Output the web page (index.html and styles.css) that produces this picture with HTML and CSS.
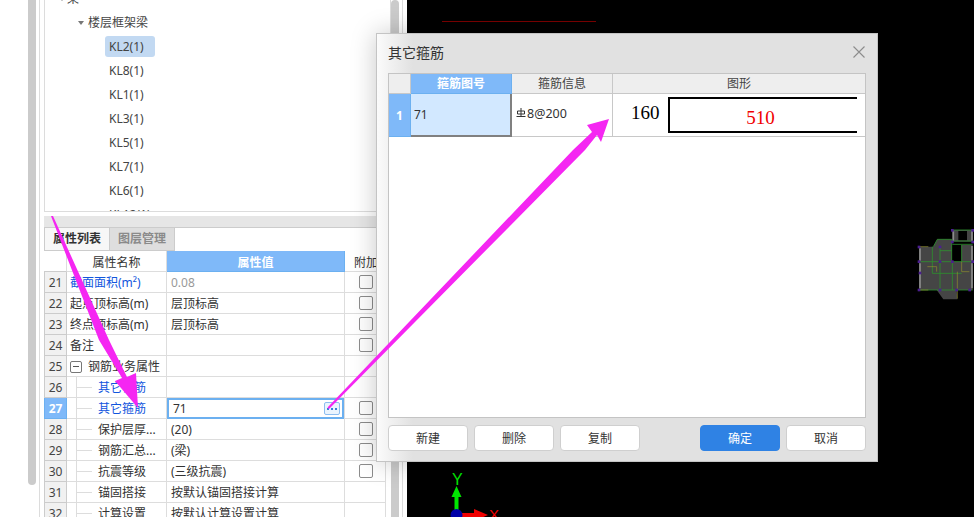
FILE: index.html
```html
<!DOCTYPE html>
<html lang="zh">
<head>
<meta charset="utf-8">
<title>其它箍筋</title>
<link rel="stylesheet" href="styles.css">
</head>
<body>
<div class="app">
  <div class="left">
    <div class="vscroll"></div>
    <div class="inner">
      <div class="tree">
        <ul class="tree-list">
          <li class="node level0"><span class="caret"></span>梁</li>
          <li class="node level1"><span class="caret"></span>楼层框架梁</li>
          <li class="node leaf"><span class="leaf-label active">KL2(1)</span></li>
          <li class="node leaf"><span class="leaf-label">KL8(1)</span></li>
          <li class="node leaf"><span class="leaf-label">KL1(1)</span></li>
          <li class="node leaf"><span class="leaf-label">KL3(1)</span></li>
          <li class="node leaf"><span class="leaf-label">KL5(1)</span></li>
          <li class="node leaf"><span class="leaf-label">KL7(1)</span></li>
          <li class="node leaf"><span class="leaf-label">KL6(1)</span></li>
          <li class="node leaf"><span class="leaf-label">KL12(1)</span></li>
        </ul>
      </div>
      <div class="bar"></div>
      <div class="tabs">
        <div class="tab on">属性列表</div>
        <div class="tab off">图层管理</div>
      </div>
      <table class="props">
        <colgroup><col class="c-idx"><col class="c-name"><col class="c-val"><col class="c-add"></colgroup>
        <thead>
          <tr><th class="idx"></th><th>属性名称</th><th class="hi">属性值</th><th class="add-h">附加</th></tr>
        </thead>
        <tbody>
          <tr><td class="idx">21</td><td class="name link">截面面积(m²)</td><td class="val muted">0.08</td><td class="add"><span class="check"></span></td></tr>
          <tr><td class="idx">22</td><td class="name">起点顶标高(m)</td><td class="val">层顶标高</td><td class="add"><span class="check"></span></td></tr>
          <tr><td class="idx">23</td><td class="name">终点顶标高(m)</td><td class="val">层顶标高</td><td class="add"><span class="check"></span></td></tr>
          <tr><td class="idx">24</td><td class="name">备注</td><td class="val"></td><td class="add"><span class="check"></span></td></tr>
          <tr><td class="idx">25</td><td class="name"><span class="group"><span class="minus"></span>钢筋业务属性</span></td><td class="val"></td><td class="add"></td></tr>
          <tr><td class="idx">26</td><td class="name child link">其它钢筋</td><td class="val"></td><td class="add"></td></tr>
          <tr class="sel"><td class="idx">27</td><td class="name child link">其它箍筋</td><td class="val editing"><span class="edit"><span>71</span><span class="more"><i></i><i></i><i></i></span></span></td><td class="add"><span class="check"></span></td></tr>
          <tr><td class="idx">28</td><td class="name child">保护层厚...</td><td class="val">(20)</td><td class="add"><span class="check"></span></td></tr>
          <tr><td class="idx">29</td><td class="name child">钢筋汇总...</td><td class="val">(梁)</td><td class="add"><span class="check"></span></td></tr>
          <tr><td class="idx">30</td><td class="name child">抗震等级</td><td class="val">(三级抗震)</td><td class="add"><span class="check"></span></td></tr>
          <tr><td class="idx">31</td><td class="name child">锚固搭接</td><td class="val">按默认锚固搭接计算</td><td class="add"></td></tr>
          <tr><td class="idx">32</td><td class="name child">计算设置</td><td class="val">按默认计算设置计算</td><td class="add"></td></tr>
        </tbody>
      </table>
    </div>
    <div class="vscroll2"></div>
    <div class="rule"></div>
  </div>

  <div class="canvas">
    <div class="redline"></div>
    <svg class="building" viewBox="0 0 222 240" width="74" height="80" aria-hidden="true">
      <path d="M57 80H100L112 58H155V125H185V75H218V210H170L172 238H130L110 210H57Z" fill="#454545"/>
      <rect x="157" y="30" width="61" height="35" fill="#454545"/>
      <rect x="175" y="33" width="26" height="28" fill="#000"/>
      <rect x="159" y="76" width="24" height="22" fill="#000"/>
      <rect x="159" y="103" width="24" height="20" fill="#000"/>
      <g fill="none" stroke="#2e8f2e" stroke-width="2.5">
        <path d="M157 30H218M157 63H218M112 58H155V125M112 58L100 80M120 92H155M97 80V125M120 80V125M57 125H218M157 73H218M185 75V125M57 210H218M120 125V210M97 125V160M97 160H120M157 125V210M120 160H185"/>
      </g>
      <g fill="none" stroke="#8f8f2e" stroke-width="2">
        <path d="M57 80H85M57 210H85M82 140H110V155M185 125V155H208M172 155V236"/>
      </g>
      <g fill="none" stroke="#8c8c8c" stroke-width="5">
        <path d="M60 85V122M60 130V205M160 32V62M216 32V62M216 78V122M216 130V205"/>
      </g>
      <g fill="#4b1f8f">
        <rect x="53" y="77" width="8" height="8"/><rect x="116" y="77" width="8" height="8"/><rect x="116" y="121" width="8" height="8"/>
        <rect x="53" y="121" width="8" height="8"/><rect x="153" y="121" width="8" height="8"/><rect x="214" y="121" width="8" height="8"/>
        <rect x="53" y="206" width="8" height="8"/><rect x="116" y="206" width="8" height="8"/><rect x="166" y="206" width="8" height="8"/>
        <rect x="205" y="206" width="8" height="8"/><rect x="153" y="27" width="8" height="8"/><rect x="214" y="27" width="8" height="8"/>
        <rect x="153" y="62" width="8" height="8"/><rect x="214" y="62" width="8" height="8"/><rect x="56" y="155" width="8" height="8"/>
      </g>
    </svg>
    <svg class="axis" viewBox="0 0 60 50" width="60" height="50" aria-hidden="true">
      <path d="M7.5 13 12.5 24H9.5V38H5.5V24H2.5Z" fill="#00e600"/>
      <path d="M13 40H25V36L39 42L25 48V44H13Z" fill="#f00000"/>
      <circle cx="7.5" cy="42" r="6" fill="#0000a8"/>
      <text class="axis-y" x="3" y="12">Y</text>
      <text class="axis-x" x="40" y="47">X</text>
    </svg>
  </div>

  <section class="dialog">
    <header class="dlg-head">
      <h1 class="dlg-title">其它箍筋</h1>
      <svg class="dlg-close" viewBox="0 0 12 12" width="12" height="12" aria-hidden="true"><path d="M.5.5l11 11M11.5.5l-11 11" stroke="#8c8c8c" stroke-width="1.1" fill="none"/></svg>
    </header>
    <div class="grid-box">
      <div class="grid-head">
        <div class="gh"></div>
        <div class="gh hi">箍筋图号</div>
        <div class="gh">箍筋信息</div>
        <div class="gh last">图形</div>
      </div>
      <div class="grid-row">
        <div class="g-idx">1</div>
        <div class="g-sel">71</div>
        <div class="g-info">
          <svg class="rebar" viewBox="0 0 10 10" width="10" height="10" aria-hidden="true"><path d="M5 0V8.5M1.5 3H8.5V6H1.5ZM.5 8.5H9.5" fill="none" stroke="#333" stroke-width="1"/></svg>
          <span class="rebar-text">8@200</span>
        </div>
        <div class="g-shape">
          <span class="dim">160</span>
          <div class="stirrup"><span class="dim-red">510</span></div>
        </div>
      </div>
    </div>
    <footer class="dlg-foot">
      <button class="btn">新建</button>
      <button class="btn">删除</button>
      <button class="btn">复制</button>
      <span class="spacer"></span>
      <button class="btn primary">确定</button>
      <button class="btn">取消</button>
    </footer>
  </section>

  <svg class="annot" viewBox="0 0 974 517" width="974" height="517" aria-hidden="true">
    <path d="M51 216 53 216 109 340 127 377 136 373 138 408 115 381 122 378 99 340Z" fill="#f526f2"/>
    <path d="M327.5 407.5 573 150 592 132 587 125 609 119 601 142 597 135 585 150 329 409Z" fill="#f526f2"/>
  </svg>
</div>
</body>
</html>
```
FILE: styles.css
```css
* { box-sizing: border-box; }
html, body { margin: 0; padding: 0; background: #000; }
body { font-family: "Noto Sans", "Noto Sans CJK SC", sans-serif; font-size: 12px; color: #333; }
.app { position: relative; display: flex; width: 974px; height: 517px; overflow: hidden; }

.left { display: flex; flex: 0 0 407px; height: 517px; padding-left: 28px; background: #fff; overflow: hidden; }
.vscroll { flex: 0 0 8px; height: 485px; background: #cbcbcb; border-radius: 0 0 5px 5px; }
.inner { flex: 0 0 352px; margin-left: 3px; padding-left: 4px; border-left: 1px solid #dcdcdc; width: 352px; }
.vscroll2 { flex: 0 0 8px; margin-left: 0; background: #cbcbcb; border-radius: 5px 5px 0 0; }
.rule { flex: 0 0 1px; margin-left: 3px; background: #dcdcdc; }

.tree { height: 212px; width: 347px; border: 1px solid #dcdcdc; border-top: 0; overflow: hidden; }
.tree-list { list-style: none; margin: -14px 0 0; padding: 0; }
.node { display: flex; align-items: center; height: 24px; line-height: 24px; color: #444; }
.level0 { padding: 2px 0 0 14px; }
.level0 .caret { margin-right: 2px; }
.level1 { padding: 2px 0 0 33px; }
.leaf { padding-left: 60px; }
.caret { width: 0; height: 0; margin-right: 4px; border-left: 3.5px solid transparent; border-right: 3.5px solid transparent; border-top: 4px solid #777; }
.leaf-label { display: block; height: 21px; line-height: 21px; padding: 0 4px; border-radius: 3px; min-width: 50px; }
.leaf-label.active { background: #c2d9f2; }

.bar { height: 12px; width: 347px; margin-top: 4px; background: #e6e6e6; border-bottom: 1px solid #ccc; }
.tabs { display: flex; height: 23px; }
.tab { width: 65px; height: 23px; line-height: 22px; text-align: center; border-right: 1px solid #ccc; border-bottom: 1px solid #ccc; }
.tab.on { width: 66px; background: #f7f7f7; color: #333; font-weight: 700; border-left: 1px solid #ccc; }
.tab.off { background: #dedede; color: #8a8a8a; font-weight: 700; }

.props { width: 342px; table-layout: fixed; border-collapse: separate; border-spacing: 0; }
.c-idx { width: 23px; }
.c-name { width: 100px; }
.c-val { width: 178px; }
.c-add { width: 41px; }
.props th, .props td { height: 21px; padding: 2px 0 0; border-right: 1px solid #ddd; border-bottom: 1px solid #ddd; font-weight: 400; white-space: nowrap; overflow: hidden; color: #333; line-height: 18px; }
.props th { padding-top: 3px; line-height: 17px; text-align: center; }
.props th.hi { background: #7fb9f9; color: #fff; font-weight: 700; border-color: #6cb0f0; }
.props th.add-h { text-align: left; padding-left: 9px; }
.props .idx { background: #f1f1f1; text-align: center; border-left: 1px solid #ccc; border-right: 1px solid #ccc; border-bottom-color: #ccc; color: #444; }
.props thead .idx { background: #fff; border-left: 0; border-right: 1px solid #ddd; }
.props .name { padding-left: 3px; }
.props .link { color: #1155dd; }
.props .val { padding-left: 4px; }
.props .muted { color: #999; }
.props .add { text-align: left; padding: 0 0 0 14px; }
.check { display: block; width: 14px; height: 14px; border: 1.5px solid #8c8c8c; border-radius: 2px; background: #fff; }
.group { display: flex; align-items: center; }
.minus { position: relative; width: 12px; height: 12px; margin-right: 6px; border: 1px solid #777; border-radius: 2px; }
.minus::after { content: ""; position: absolute; left: 2px; top: 4px; width: 6px; height: 1px; background: #555; }
.props .name.child { position: relative; padding-left: 31px; }
.name.child::before { content: ""; position: absolute; left: 9px; top: 0; bottom: -1px; width: 1px; background: #ddd; }
.name.child::after { content: ""; position: absolute; left: 9px; top: 10px; width: 16px; height: 1px; background: #ddd; }
.props .sel .idx { background: #7fb9f9; color: #fff; font-weight: 700; border-color: #6cb0f0; }
.props .val.editing { padding: 0; line-height: 17px; border-bottom: 0; }
.edit { display: flex; align-items: center; justify-content: space-between; height: 21px; padding: 0 2px 0 4px; border: 2px solid #6cb0f0; }
.more { display: flex; align-items: center; justify-content: center; gap: 2px; width: 16px; height: 13px; background: #eaf4fe; border: 1px solid #8dbdf0; border-radius: 2px; }
.more i { display: block; width: 2px; height: 2px; background: #3a7fd8; }

.canvas { position: relative; flex: 1; background: #000; }
.redline { position: absolute; left: 35px; top: 21px; width: 154px; height: 1px; background: #7a0000; }
.building { position: absolute; left: 493px; top: 220px; }
.axis { position: absolute; left: 42px; top: 473px; }
.axis-y { font: 16px "Liberation Sans", sans-serif; fill: #00e600; }
.axis-x { font: 15px "Liberation Sans", sans-serif; fill: #f00000; }

.dialog { position: absolute; left: 376px; top: 33px; width: 502px; height: 429px; display: flex; flex-direction: column; padding: 0 11px 10px; background: linear-gradient(to right, #fbfbfb 0, #e1e1e1 36px); border: 1px solid #c4c4c4; box-shadow: 0 0 24px rgba(0, 0, 0, .22); }
.dlg-head { display: flex; align-items: center; justify-content: space-between; flex: 0 0 39px; padding: 0 1px 4px 0; }
.dlg-title { margin: 0; font-size: 14px; font-weight: 400; color: #333; }
.grid-box { flex: 1; background: #fff; border: 1px solid #c4c4c4; width: 478px; }
.grid-head { display: grid; grid-template-columns: 22px 101px 101px 1fr; height: 20px; }
.gh { background: #eeeeee; text-align: center; line-height: 19px; border-right: 1px solid #c8c8c8; border-bottom: 1px solid #c8c8c8; color: #444; }
.gh.hi { background: #7fb9f9; color: #fff; font-weight: 700; border-color: #6cb0f0; }
.gh.last { border-right: 0; }
.grid-row { display: grid; grid-template-columns: 22px 101px 101px 1fr; height: 43px; }
.g-idx { display: flex; align-items: center; justify-content: center; background: #7fb9f9; color: #fff; font-weight: 700; border-right: 1px solid #6cb0f0; border-bottom: 1px solid #6cb0f0; }
.g-sel { display: flex; align-items: center; padding-left: 3px; background: #d2e8ff; border-right: 2px solid #808080; border-bottom: 2px solid #808080; }
.g-info { display: flex; align-items: center; padding: 0 0 3px 4px; border-right: 1px solid #c8c8c8; border-bottom: 1px solid #c8c8c8; }
.rebar { margin: 0 1px 2px 0; }
.rebar-text { font-size: 12.5px; }
.g-shape { display: flex; align-items: center; padding: 0 8px 3px 18px; border-bottom: 1px solid #c8c8c8; }
.dim { width: 37px; margin-top: -2px; font: 19px/1 "Liberation Serif", serif; color: #000; }
.stirrup { display: flex; align-items: center; justify-content: center; width: 189px; height: 36px; padding: 5px 6px 0 0; margin-top: 2px; border: 2px solid #000; border-right: 0; background: #fff; }
.dim-red { font: 19px/1 "Liberation Serif", serif; color: #f00000; }
.dlg-foot { display: flex; flex: 0 0 26px; gap: 6px; margin-top: 7px; }
.btn { flex: 0 0 80px; height: 26px; padding: 0; font: inherit; color: #333; background: #fff; border: 1px solid #cfcfcf; border-radius: 4px; }
.btn.primary { background: #2f82e4; border-color: #2f82e4; color: #fff; }
.spacer { flex: 0 0 48px; }
.dlg-close { display: block; }

.annot { position: absolute; left: 0; top: 0; pointer-events: none; }
```
